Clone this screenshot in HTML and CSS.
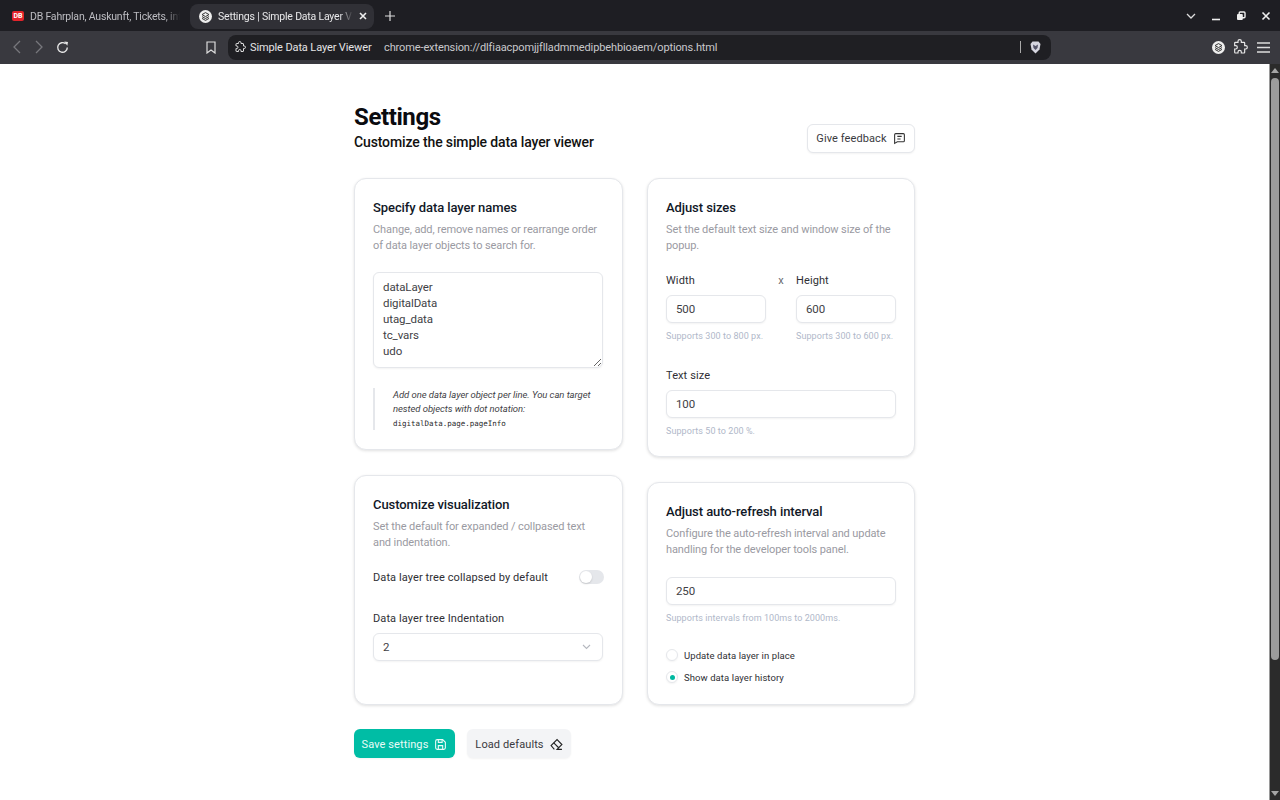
FILE: index.html
```html
<!DOCTYPE html>
<html lang="en">
<head>
<meta charset="utf-8">
<title>Settings | Simple Data Layer Viewer</title>
<link rel="stylesheet" href="styles.css">
</head>
<body>
<div class="browser">
  <div class="tabstrip">
    <div class="tab">
      <span class="favicon db-badge">DB</span>
      <span class="tab-title">DB Fahrplan, Auskunft, Tickets, inf</span>
    </div>
    <div class="tab tab-active">
      <svg class="favicon" width="13" height="13" viewBox="0 0 13 13"><circle cx="6.5" cy="6.5" r="6.5" fill="#eee"/><path d="M6.5 2.6 10 4.6 6.5 6.6 3 4.6Z" fill="none" stroke="#333" stroke-width="1"/><path d="M3 6.6 6.5 8.5 10 6.6M3 8.4 6.5 10.4 10 8.4" fill="none" stroke="#333" stroke-width="1"/></svg>
      <span class="tab-title">Settings | Simple Data Layer V</span>
      <svg class="tab-close" width="8" height="8" viewBox="0 0 8 8"><path d="M1 1 7 7M7 1 1 7" stroke="#eee" stroke-width="1.6"/></svg>
    </div>
    <svg class="newtab" width="10" height="10" viewBox="0 0 10 10"><path d="M5 0V10M0 5H10" stroke="#ddd" stroke-width="1.2"/></svg>
    <div class="grow"></div>
    <div class="winctrls">
      <svg width="10" height="6" viewBox="0 0 10 6"><path d="M1 1 5 5 9 1" fill="none" stroke="#ddd" stroke-width="1.3"/></svg>
      <svg width="10" height="10" viewBox="0 0 10 10"><path d="M1 8.5H9" stroke="#eee" stroke-width="1.6"/></svg>
      <svg width="10" height="10" viewBox="0 0 10 10"><rect x="3.2" y="1" width="5.8" height="5.8" rx="1" fill="none" stroke="#eee" stroke-width="1.4"/><rect x="1" y="3" width="5.8" height="6" rx="1" fill="#eee"/></svg>
      <svg width="10" height="10" viewBox="0 0 10 10"><path d="M1.5 1.5 8.5 8.5M8.5 1.5 1.5 8.5" stroke="#eee" stroke-width="1.6"/></svg>
    </div>
  </div>
  <div class="toolbar">
    <svg class="nav-back" width="8" height="14" viewBox="0 0 8 14"><path d="M7 1 1 7 7 13" fill="none" stroke="#77777c" stroke-width="1.3"/></svg>
    <svg class="nav-fwd" width="8" height="14" viewBox="0 0 8 14"><path d="M1 1 7 7 1 13" fill="none" stroke="#77777c" stroke-width="1.3"/></svg>
    <svg class="nav-reload" width="13" height="13" viewBox="0 0 13 13"><path d="M11.3 6.5A4.8 4.8 0 1 1 9.6 2.8" fill="none" stroke="#e6e6e6" stroke-width="1.4"/><path d="M8.3 0.6 12 1 11.3 4.8Z" fill="#e6e6e6"/></svg>
    <svg class="nav-mark" width="10" height="13" viewBox="0 0 10 13"><path d="M1 1H9V12L5 9 1 12Z" fill="none" stroke="#ddd" stroke-width="1.2"/></svg>
    <div class="urlbar">
      <svg class="url-ext" width="12" height="12" viewBox="0 0 24 24"><path d="M9 3.5a2.5 2.5 0 0 1 5 0V5h4a1 1 0 0 1 1 1v4h1.5a2.5 2.5 0 0 1 0 5H19v5a1 1 0 0 1-1 1h-4v-1.5a2.5 2.5 0 0 0-5 0V21H5a1 1 0 0 1-1-1v-5h1.5a2.5 2.5 0 0 0 0-5H4V6a1 1 0 0 1 1-1h4Z" fill="none" stroke="#ddd" stroke-width="2"/></svg>
      <span class="url-name">Simple Data Layer Viewer</span>
      <span class="url-text">chrome-extension://dlfiaacpomjjflladmmedipbehbioaem/options.html</span>
      <div class="grow"></div>
      <span class="url-sep"></span>
      <svg class="url-brave" width="11" height="13" viewBox="0 0 11 13"><path d="M2.5 0.5H8.5L10.5 3 9.5 8.5 5.5 12.5 1.5 8.5 0.5 3Z" fill="#d6d6e0"/><path d="M3 3.5 5.5 5 8 3.5 7.5 7 5.5 9 3.5 7Z" fill="#55556a"/></svg>
    </div>
    <div class="grow"></div>
    <svg class="tool-stack" width="13" height="13" viewBox="0 0 13 13"><circle cx="6.5" cy="6.5" r="6.5" fill="#eee"/><path d="M6.5 2.6 10 4.6 6.5 6.6 3 4.6Z" fill="none" stroke="#333" stroke-width="1"/><path d="M3 6.6 6.5 8.5 10 6.6M3 8.4 6.5 10.4 10 8.4" fill="none" stroke="#333" stroke-width="1"/></svg>
    <svg class="tool-ext" width="16" height="16" viewBox="0 0 24 24"><path d="M9 3.5a2.5 2.5 0 0 1 5 0V5h4a1 1 0 0 1 1 1v4h1.5a2.5 2.5 0 0 1 0 5H19v5a1 1 0 0 1-1 1h-4v-1.5a2.5 2.5 0 0 0-5 0V21H5a1 1 0 0 1-1-1v-5h1.5a2.5 2.5 0 0 0 0-5H4V6a1 1 0 0 1 1-1h4Z" fill="none" stroke="#e6e6e6" stroke-width="1.8"/></svg>
    <svg class="tool-menu" width="13" height="11" viewBox="0 0 13 11"><path d="M0 1H13M0 5.5H13M0 10H13" stroke="#ddd" stroke-width="1.3"/></svg>
  </div>
  <div class="viewport">
    <main class="page">
      <div class="content">
        <header class="page-head">
          <div class="head-text">
            <h1 class="page-title">Settings</h1>
            <p class="page-sub">Customize the simple data layer viewer</p>
          </div>
          <button class="btn btn-outline" type="button">Give feedback
            <svg width="13" height="13" viewBox="0 0 24 24" fill="none" stroke="#333" stroke-width="2"><path d="M3 5a2 2 0 0 1 2-2h14a2 2 0 0 1 2 2v11a2 2 0 0 1-2 2H8l-5 3Z"/><path d="M8 8H16M8 13H14"/></svg>
          </button>
        </header>
        <div class="columns">
          <div class="column">
            <section class="card">
              <h2 class="card-title">Specify data layer names</h2>
              <p class="card-desc">Change, add, remove names or rearrange order of data layer objects to search for.</p>
              <textarea class="field textarea" rows="5">dataLayer
digitalData
utag_data
tc_vars
udo</textarea>
              <blockquote class="note">Add one data layer object per line. You can target nested objects with dot notation:<br><code class="note-code">digitalData.page.pageInfo</code></blockquote>
            </section>
            <section class="card card-fill">
              <h2 class="card-title">Customize visualization</h2>
              <p class="card-desc">Set the default for expanded / collpased text and indentation.</p>
              <div class="toggle-row">
                <span class="label">Data layer tree collapsed by default</span>
                <span class="toggle"><span class="toggle-knob"></span></span>
              </div>
              <div class="label label-select">Data layer tree Indentation</div>
              <div class="field select"><span>2</span>
                <svg width="9" height="6" viewBox="0 0 9 6"><path d="M1 1 4.5 4.5 8 1" fill="none" stroke="#b5b8bf" stroke-width="1.1"/></svg>
              </div>
            </section>
          </div>
          <div class="column">
            <section class="card card-sizes">
              <h2 class="card-title">Adjust sizes</h2>
              <p class="card-desc">Set the default text size and window size of the popup.</p>
              <div class="size-row">
                <div class="size-col">
                  <div class="label">Width</div>
                  <input class="field input" value="500">
                  <div class="hint">Supports 300 to 800 px.</div>
                </div>
                <div class="times">x</div>
                <div class="size-col">
                  <div class="label">Height</div>
                  <input class="field input" value="600">
                  <div class="hint">Supports 300 to 600 px.</div>
                </div>
              </div>
              <div class="label label-text">Text size</div>
              <input class="field input input-full" value="100">
              <div class="hint">Supports 50 to 200 %.</div>
            </section>
            <section class="card card-refresh">
              <h2 class="card-title">Adjust auto-refresh interval</h2>
              <p class="card-desc">Configure the auto-refresh interval and update handling for the developer tools panel.</p>
              <input class="field input input-full input-refresh" value="250">
              <div class="hint">Supports intervals from 100ms to 2000ms.</div>
              <div class="radio-row radio-first"><span class="radio"></span><span class="radio-label">Update data layer in place</span></div>
              <div class="radio-row"><span class="radio radio-on"></span><span class="radio-label">Show data layer history</span></div>
            </section>
          </div>
        </div>
        <div class="actions">
          <button class="btn btn-primary" type="button">Save settings
            <svg width="13" height="13" viewBox="0 0 24 24" fill="none" stroke="#e8fbf7" stroke-width="2"><path d="M6 3H16L21 8V18A3 3 0 0 1 18 21H6A3 3 0 0 1 3 18V6A3 3 0 0 1 6 3Z"/><path d="M8 3V8H15V3M8 21V14H16V21"/></svg>
          </button>
          <button class="btn btn-soft" type="button">Load defaults
            <svg width="13" height="13" viewBox="0 0 24 24" fill="none" stroke="#222" stroke-width="2"><path d="M8 21 2 14 13 3 22 12 13 21H22"/><path d="M7 9 16 18"/></svg>
          </button>
        </div>
      </div>
    </main>
    <div class="scrollbar">
      <span class="arrow-up"></span>
      <span class="thumb"></span>
      <span class="grow"></span>
      <span class="arrow-down"></span>
    </div>
  </div>
</div>
</body>
</html>
```
FILE: styles.css
```css
* { box-sizing: border-box; }
html, body { margin: 0; height: 100%; overflow: hidden; }
body { font-family: Roboto, "Noto Sans", sans-serif; color: #1f2937; background: #fff; }
.grow { flex: 1; }
.browser { display: flex; flex-direction: column; height: 800px; }

.tabstrip { height: 31px; background: #1e1e23; display: flex; align-items: center; flex: none; }
.tab { display: flex; align-items: center; height: 25px; margin-top: 1px; width: 190px; padding-left: 12px; color: #bdbdc2; font-size: 10.5px; letter-spacing: -.2px; }
.tab-active { width: 184px; padding-left: 9px; background: #303036; border-radius: 8px; color: #e8e8ea; }
.favicon { flex: none; margin-right: 6px; }
.db-badge { width: 12px; height: 10px; margin-right: 6px; background: #e3242b; border-radius: 2px; color: #fff; font-size: 7px; line-height: 10px; font-weight: 700; text-align: center; letter-spacing: 0; }
.tab-title { white-space: nowrap; width: 150px; -webkit-mask-image: linear-gradient(90deg, #000 90%, transparent); mask-image: linear-gradient(90deg, #000 90%, transparent); }
.tab-active .tab-title { width: 135px; }
.tab-close { margin-left: 6px; flex: none; }
.newtab { margin-left: 11px; }
.winctrls { display: flex; align-items: center; gap: 15px; margin-right: 9px; }

.toolbar { height: 33px; background: #39393f; display: flex; align-items: center; flex: none; padding-bottom: 1px; }
.nav-back { margin-left: 13px; }
.nav-fwd { margin-left: 14px; }
.nav-reload { margin-left: 13px; }
.nav-mark { margin-left: 137px; }
.urlbar { margin-left: 12px; width: 823px; height: 25px; background: #1f1f23; border-radius: 8px; display: flex; align-items: center; color: #e4e4e6; font-size: 11px; letter-spacing: -.12px; }
.url-ext { margin-left: 6px; }
.url-name { margin-left: 4px; width: 134px; white-space: nowrap; }
.url-text { color: #c9c9cc; white-space: nowrap; }
.url-sep { width: 1px; height: 12px; background: #aaa; }
.url-brave { margin-left: 9px; margin-right: 10px; }
.tool-stack { margin-right: 7px; }
.tool-ext { margin-right: 9px; }
.tool-menu { margin-right: 10px; }

.viewport { flex: 1; display: flex; min-height: 0; }
.page { flex: 1; background: #fff; }
.content { width: 561px; margin-left: 354px; padding-top: 36px; }
.page-head { display: flex; justify-content: space-between; align-items: flex-end; height: 53px; }
.head-text { margin-bottom: 1px; }
.page-title { margin: 0; font-size: 24px; line-height: 32px; font-weight: 700; color: #0b0b0f; letter-spacing: -.4px; }
.page-sub { margin: -1px 0 0; font-size: 14px; line-height: 20px; font-weight: 500; color: #111; letter-spacing: -.13px; }
.btn { display: inline-flex; align-items: center; justify-content: center; gap: 6px; height: 29px; border-radius: 6px; border: 1px solid transparent; font: inherit; font-size: 11px; font-weight: 400; letter-spacing: .1px; padding: 0; }
.btn-outline { width: 108px; background: #fff; border-color: #e5e7eb; color: #3a3a40; box-shadow: 0 1px 2px rgba(0,0,0,.05); }
.columns { display: grid; grid-template-columns: 269px 268px; column-gap: 24px; margin-top: 25px; }
.column { display: flex; flex-direction: column; gap: 25px; }
.card { border: 1px solid #e5e7eb; border-radius: 12px; padding: 19px 18px 19px; background: #fff; box-shadow: 0 1px 3px rgba(0,0,0,.12); }
.card-fill { height: 230px; }
.card-sizes { padding-bottom: 18px; }
.card-refresh { padding-bottom: 21px; }
.card-title { margin: 0 0 5px; font-size: 13px; line-height: 19px; font-weight: 500; color: #111827; letter-spacing: -.08px; }
.card-desc { margin: 0; font-size: 11px; line-height: 16px; color: #9a9aa2; letter-spacing: -.1px; }
.field { display: block; border: 1px solid #e5e7eb; border-radius: 6px; background: #fff; font: inherit; font-size: 11.5px; color: #3f3f46; box-shadow: 0 1px 2px rgba(0,0,0,.05); outline: none; letter-spacing: -.1px; }
.textarea { width: 230px; height: 96px; margin-top: 18px; padding: 6px 9px; line-height: 16px; }
.note { margin: 20px 0 0; border-left: 2px solid #e5e7eb; padding-left: 18px; font-size: 9.5px; line-height: 14.25px; font-style: italic; color: #3f3f46; height: 42px; letter-spacing: -.06px; }
.note-code { font-family: "DejaVu Sans Mono", "Liberation Mono", monospace; font-style: normal; font-size: 7.5px; color: #27272a; letter-spacing: 0; vertical-align: 1px; }
.label { font-size: 11px; line-height: 16px; font-weight: 400; color: #2f2f35; letter-spacing: .1px; }
.toggle-row { display: flex; justify-content: space-between; align-items: center; margin-top: 18px; height: 16px; }
.toggle-row .label { margin-top: 2px; }
.toggle { width: 25px; height: 14px; background: #e5e7eb; border-radius: 7px; padding: 1px; display: block; }
.toggle-knob { display: block; width: 12px; height: 12px; background: #fff; border-radius: 50%; box-shadow: 0 1px 2px rgba(0,0,0,.15); }
.label-select { margin-top: 26px; }
.select { width: 230px; height: 28px; margin-top: 6px; padding: 0 11px 0 9px; display: flex; align-items: center; justify-content: space-between; }
.size-row { display: flex; margin-top: 19px; }
.size-col { width: 100px; }
.times { width: 30px; text-align: center; font-size: 11px; line-height: 15px; color: #6b6b70; }
.input { width: 100%; height: 28px; margin-top: 6px; padding: 0 9px; }
.input-full { width: 230px; }
.input-refresh { margin-top: 19px; }
.hint { font-size: 9px; line-height: 14px; margin-top: 6px; color: #b0b8c9; white-space: nowrap; letter-spacing: .07px; }
.label-text { margin-top: 25px; }
.radio-row { display: flex; align-items: center; gap: 6px; margin-top: 10px; height: 12px; }
.radio-first { margin-top: 24px; }
.radio { width: 12px; height: 12px; border: 1px solid #e5e7eb; border-radius: 50%; background: #fff; box-shadow: 0 1px 2px rgba(0,0,0,.05); display: flex; align-items: center; justify-content: center; }
.radio-on::after { content: ""; width: 5px; height: 5px; border-radius: 50%; background: #00b8a0; }
.radio-label { font-size: 9.5px; line-height: 12px; margin-top: 2px; font-weight: 400; color: #2f2f35; letter-spacing: .08px; }
.actions { display: flex; gap: 12px; margin-top: 24px; }
.actions .btn { padding-top: 1px; }
.btn-primary { width: 101px; background: #00bda5; color: #e8fbf7; box-shadow: 0 1px 2px rgba(0,0,0,.05); }
.btn-soft { width: 104px; background: #f3f4f6; color: #3a3a40; box-shadow: 0 1px 2px rgba(0,0,0,.05); }

.scrollbar { width: 11px; flex: none; background: #2b2b2b; border-left: 1px solid #9a9a9a; display: flex; flex-direction: column; align-items: center; }
.arrow-up { width: 0; height: 0; margin-top: 4px; border: 4px solid transparent; border-top: 0; border-bottom: 5px solid #a5a5a5; }
.thumb { width: 8px; height: 582px; margin-top: 5px; background: #9c9c9c; border-radius: 4px; flex: none; }
.arrow-down { width: 0; height: 0; margin-bottom: 4px; border: 4px solid transparent; border-bottom: 0; border-top: 5px solid #a5a5a5; }
```
